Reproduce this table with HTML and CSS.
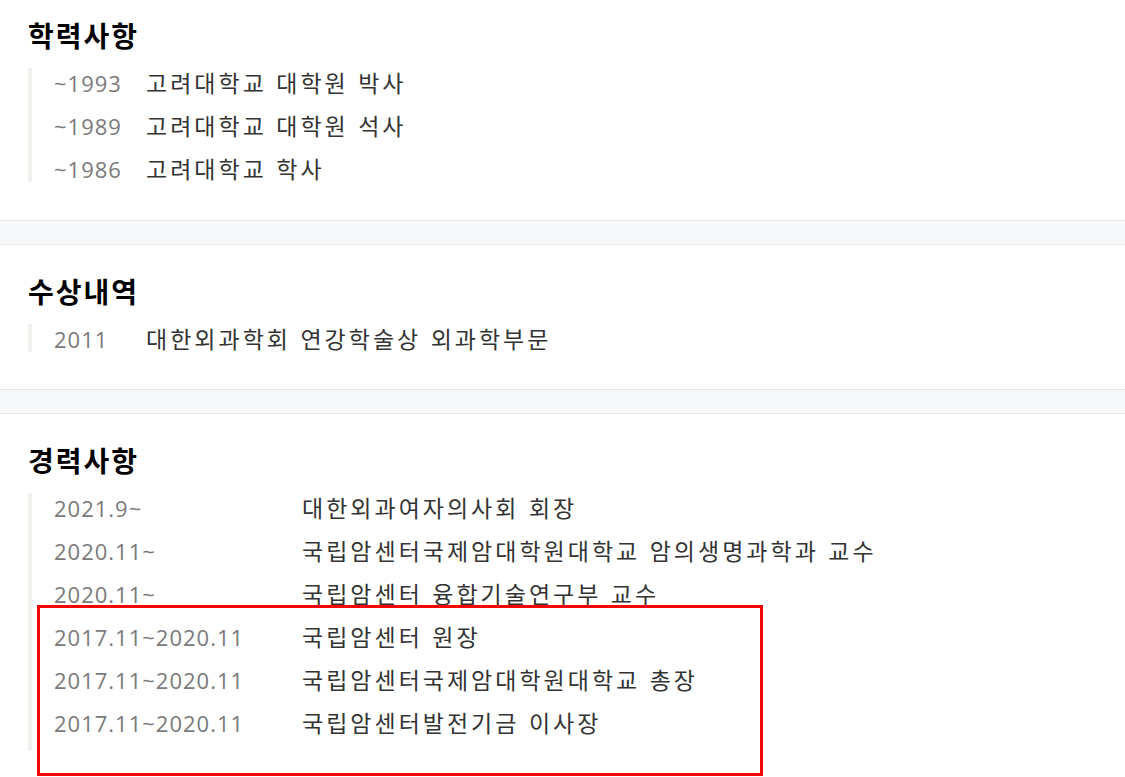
FILE: index.html
```
<!DOCTYPE html>
<html lang="ko">
<head>
    <meta charset="UTF-8">
    <meta name="viewport" content="width=device-width, initial-scale=1.0">
    <title>학력 및 경력</title>
    <link rel="stylesheet" href="styles.css">
</head>
<body>
    <div class="profile">
        <!-- 학력 -->
        <section class="block block-first">
            <h2>학력사항</h2>
            <ul class="history history-short">
                <li><span class="year">~1993</span><span class="desc">고려대학교 대학원 박사</span></li>
                <li><span class="year">~1989</span><span class="desc">고려대학교 대학원 석사</span></li>
                <li><span class="year">~1986</span><span class="desc">고려대학교 학사</span></li>
            </ul>
        </section>
        <div class="spacer"></div>

        <!-- 수상 -->
        <section class="block">
            <h2>수상내역</h2>
            <ul class="history history-short">
                <li><span class="year">2011</span><span class="desc">대한외과학회 연강학술상 외과학부문</span></li>
            </ul>
        </section>
        <div class="spacer"></div>

        <!-- 경력 -->
        <section class="block block-last">
            <h2>경력사항</h2>
            <ul class="history history-long">
                <li><span class="year">2021.9~</span><span class="desc">대한외과여자의사회 회장</span></li>
                <li><span class="year">2020.11~</span><span class="desc">국립암센터국제암대학원대학교 암의생명과학과 교수</span></li>
                <li><span class="year">2020.11~</span><span class="desc">국립암센터 융합기술연구부 교수</span></li>
                <li><span class="year">2017.11~2020.11</span><span class="desc">국립암센터 원장</span></li>
                <li><span class="year">2017.11~2020.11</span><span class="desc">국립암센터국제암대학원대학교 총장</span></li>
                <li><span class="year">2017.11~2020.11</span><span class="desc">국립암센터발전기금 이사장</span></li>
            </ul>
            <div class="highlight"></div>
        </section>
    </div>
</body>
</html>
```
FILE: styles.css
```
/* General Styles */
body {
    font-family: "Noto Sans CJK KR", "Noto Sans", sans-serif;
    background-color: #fff;
    margin: 0;
    padding: 0;
    color: #333;
}
.profile {
    width: 100%;
}
.block {
    padding: 28px 28px 37px;
    background-color: #fff;
}
.block-first {
    padding-top: 17px;
    padding-bottom: 38px;
}
.block-last {
    position: relative;
    padding-bottom: 26px;
}
.block h2 {
    margin: 0 0 15px;
    font-size: 28px;
    font-weight: 700;
    letter-spacing: 2px;
    color: #000;
    line-height: 36px;
}
.spacer {
    height: 23px;
    background-color: #f7f8fa;
    border-top: 1px solid #e6e8eb;
    border-bottom: 1px solid #e6e8eb;
}

/* 이력 목록 */
.history {
    list-style: none;
    margin: 0;
    padding: 0 0 0 22px;
    border-left: 4px solid #f1f0ed;
    border-radius: 2px;
    display: flex;
    flex-direction: column;
    gap: 15px;
}
.history-long {
    padding-bottom: 15px;
}
.history li {
    display: flex;
    align-items: baseline;
    height: 28px;
    line-height: 28px;
}
.year {
    flex-shrink: 0;
    color: #7a7a7a;
    font-family: "Open Sans", "Noto Sans", sans-serif;
    font-size: 22px;
    letter-spacing: 1px;
}
.history-short .year {
    width: 92px;
}
.history-long .year {
    width: 248px;
}
.desc {
    color: #333;
    font-size: 23px;
    letter-spacing: 3px;
}

/* 강조 박스 */
.highlight {
    position: absolute;
    left: 37px;
    top: 191px;
    width: 720px;
    height: 165px;
    border: 3px solid #f00;
}
```
